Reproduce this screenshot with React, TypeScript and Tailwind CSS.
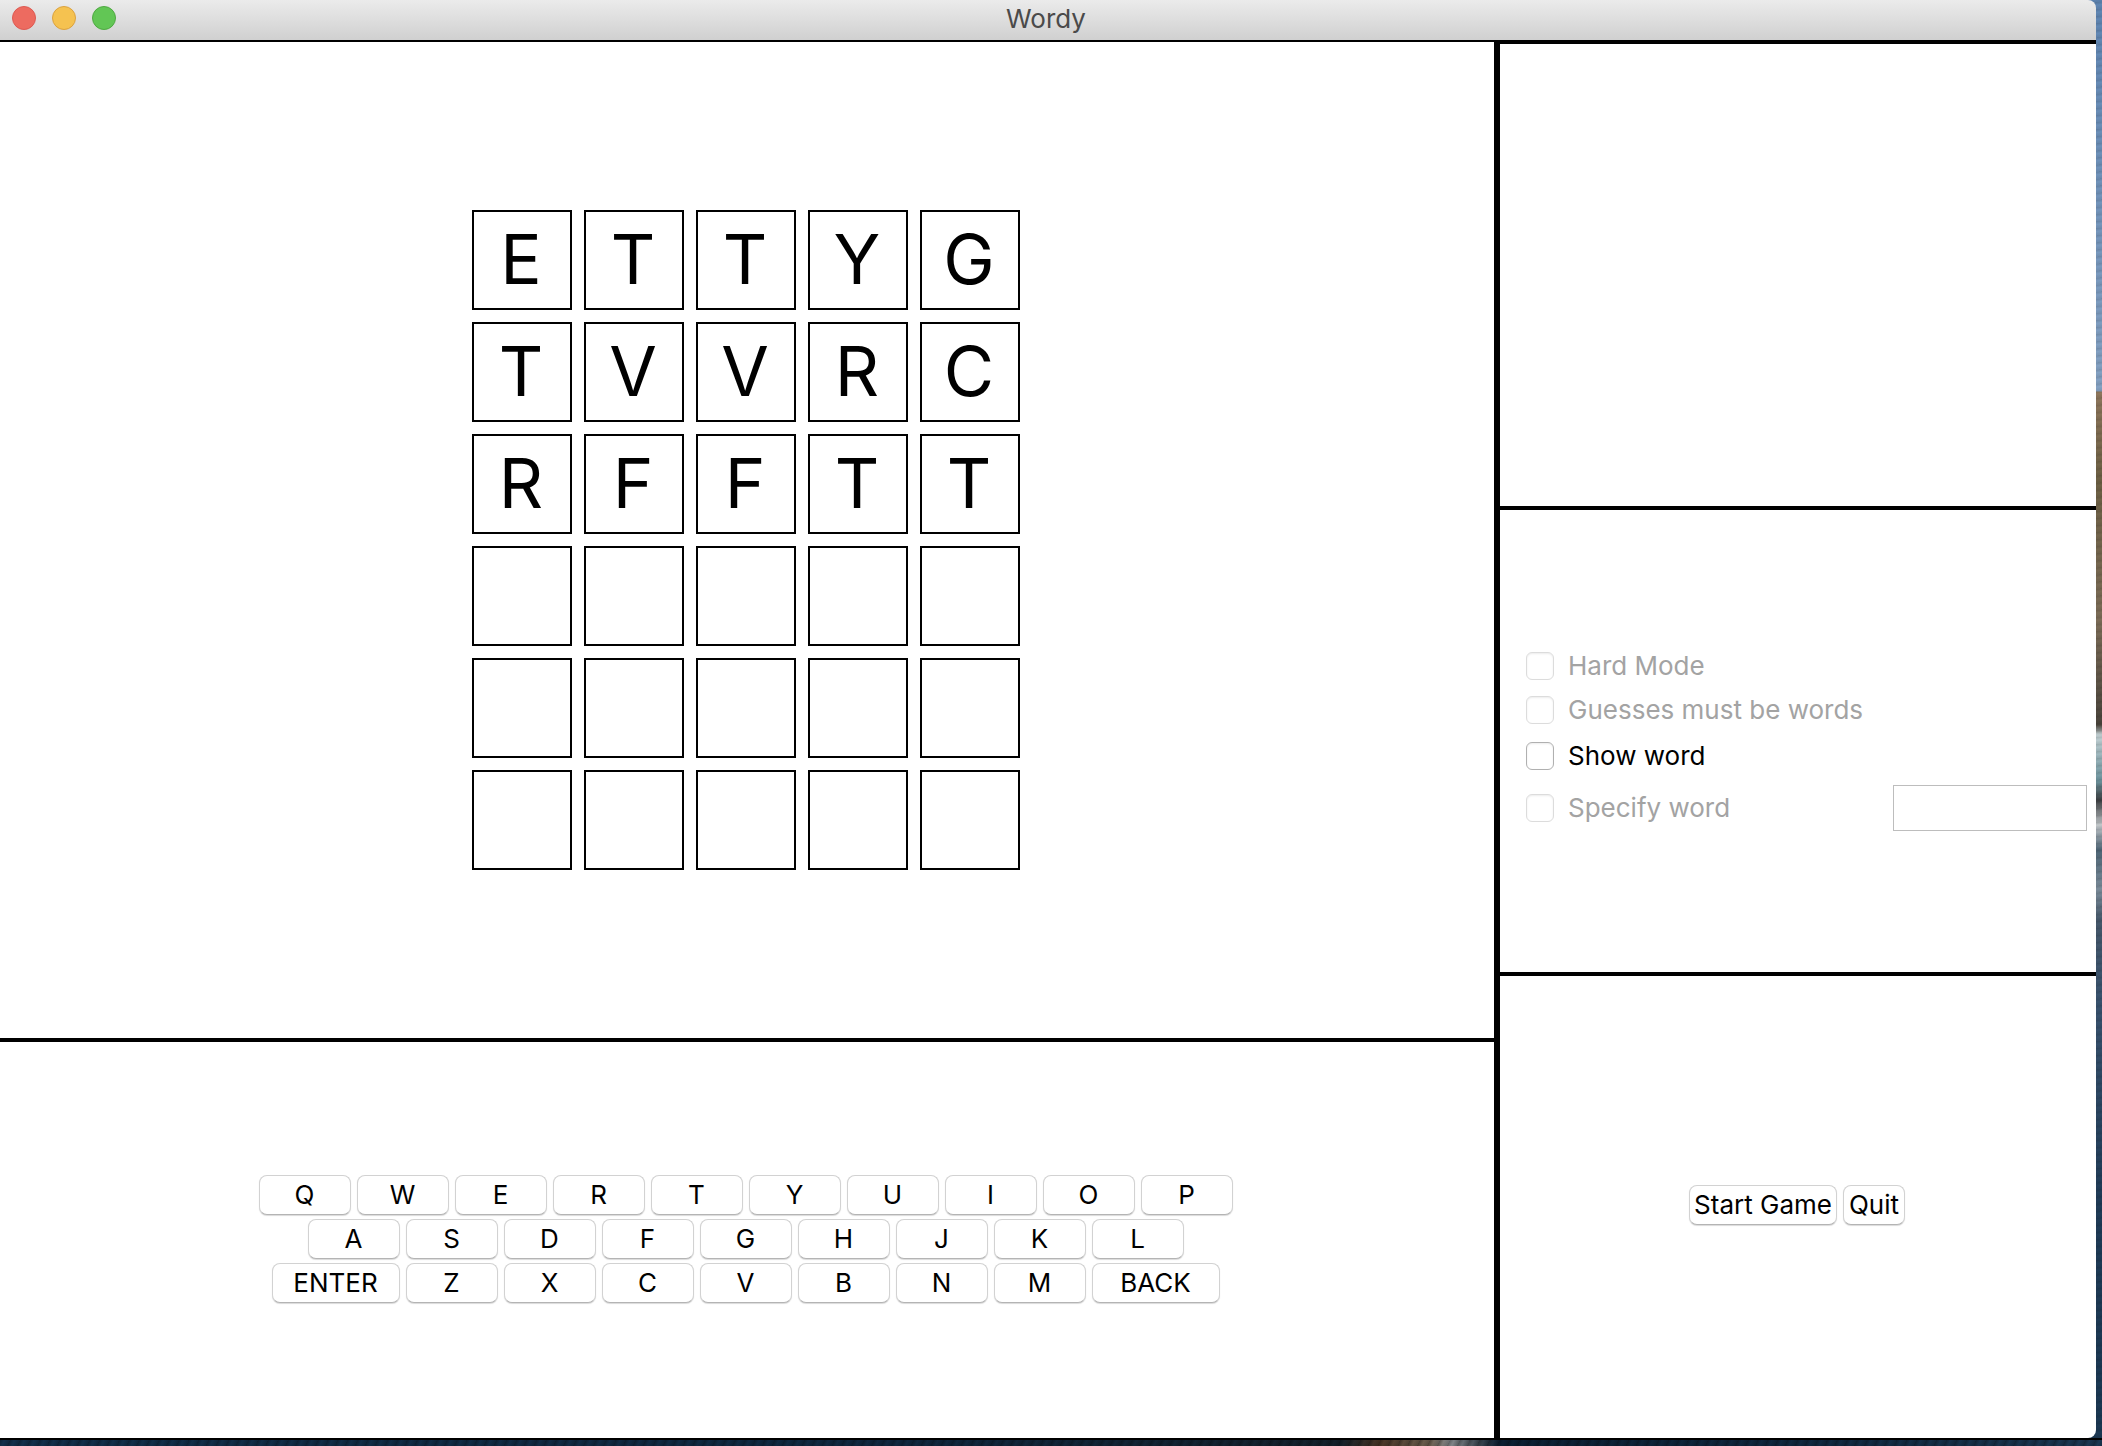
import { useState, type ReactNode } from "react";

const guesses = ["ETTYG", "TVVRC", "RFFTT", "", "", ""];
const keyRows = [
  ["Q", "W", "E", "R", "T", "Y", "U", "I", "O", "P"],
  ["A", "S", "D", "F", "G", "H", "J", "K", "L"],
  ["ENTER", "Z", "X", "C", "V", "B", "N", "M", "BACK"],
];

function TitleBar() {
  return (
    <header className="grid h-[42px] shrink-0 grid-cols-[1fr_auto_1fr] items-center rounded-tr-lg border-b-2 border-black bg-linear-to-b from-[#ebebeb] to-[#d0d0d0] pr-4 pb-1 pl-3">
      <div className="flex gap-4">
        <button aria-label="Close" className="size-6 rounded-full border border-[#dd5a52] bg-[#ed6b60]" />
        <button aria-label="Minimize" className="size-6 rounded-full border border-[#dba240] bg-[#f5c250]" />
        <button aria-label="Zoom" className="size-6 rounded-full border border-[#4fa942] bg-[#62c655]" />
      </div>
      <h1 className="pt-0.5 text-[26px] leading-8 text-[#4a4a4a]">Wordy</h1>
    </header>
  );
}

function Board() {
  return (
    <section aria-label="Board" className="flex flex-1 items-center justify-center pr-0.5">
      <div className="grid grid-cols-5 gap-3">
        {guesses.map((word, row) =>
          [0, 1, 2, 3, 4].map((col) => (
            <div
              key={`${row}-${col}`}
              className="flex size-[100px] items-center justify-center border-2 border-black pr-0.5 pb-0.5 text-[69px] leading-none"
            >
              {word[col]}
            </div>
          )),
        )}
      </div>
    </section>
  );
}

function PushButton({ children, size }: { children: ReactNode; size: string }) {
  return (
    <button
      className={`${size} h-10 rounded-lg border border-[#d2d2d2] border-b-[#b4b4b4] bg-white text-center text-[26px] leading-8 whitespace-nowrap shadow-[0_1px_1px_rgba(0,0,0,0.15)]`}
    >
      {children}
    </button>
  );
}

function Keyboard() {
  return (
    <section
      aria-label="Keyboard"
      className="flex h-[400px] flex-col items-center justify-center gap-1 border-t-4 border-black pr-[3px] pb-0.5"
    >
      {keyRows.map((row) => (
        <div key={row[0]} className="flex gap-1.5">
          {row.map((k) => (
            <PushButton key={k} size={k.length > 1 ? "w-32" : "w-[92px]"}>
              {k}
            </PushButton>
          ))}
        </div>
      ))}
    </section>
  );
}

function Option({ label, disabled, children, height }: { label: string; disabled?: boolean; children?: ReactNode; height: string }) {
  const [on, setOn] = useState(false);
  return (
    <div className={`${height} flex items-center justify-between`}>
      <label className={`flex items-center gap-3.5 text-[26px] leading-8 ${disabled ? "text-[#a3a3a3]" : "text-black"}`}>
        <input
          type="checkbox"
          checked={on}
          disabled={disabled}
          onChange={(e) => setOn(e.target.checked)}
          className={`size-7 appearance-none rounded-md border bg-white shadow-[inset_0_1px_2px_rgba(0,0,0,0.08)] checked:bg-[#2f7cf6] ${disabled ? "border-[#dcdcdc]" : "border-[#b0b0b0]"}`}
        />
        {label}
      </label>
      {children}
    </div>
  );
}

export default function App() {
  return (
    <div className="flex h-screen min-h-[1000px] flex-col bg-[#0d1f30] font-['Inter',sans-serif] text-black">
      <div className="flex min-h-0 flex-1 bg-[repeating-linear-gradient(172deg,rgba(0,0,0,0.12)_0px,transparent_3px,rgba(0,0,0,0.08)_7px),linear-gradient(to_bottom,#5f86b4_0px,#86a3c4_391px,#8f775d_392px,#6d6044_480px,#7d6d58_620px,#4a443c_725px,#c5d3d6_735px,#6f96a0_780px,#3c3f42_800px,#c3c8cb_825px,#4f6677_850px,#7d8e9c_890px,#46586b_920px,#39536f_1000px,#203c58_1200px,#1b3853_1430px)]">
        <div className="flex min-w-0 flex-1 flex-col">
          <TitleBar />
          <main className="flex min-h-0 flex-1 rounded-br-lg bg-white">
            <div className="flex min-w-0 flex-1 flex-col">
              <Board />
              <Keyboard />
            </div>
            <aside className="grid w-[602px] grid-rows-[232fr_233fr_233fr] border-l-6 border-black">
              <section aria-label="Messages" className="border-t-2 border-black" />
              <section aria-label="Options" className="flex flex-col justify-center border-t-4 border-black pr-[9px] pb-0.5 pl-[26px]">
                <Option label="Hard Mode" disabled height="h-11" />
                <Option label="Guesses must be words" disabled height="h-11" />
                <Option label="Show word" height="h-12" />
                <Option label="Specify word" disabled height="h-14">
                  <input
                    type="text"
                    aria-label="Word to guess"
                    className="h-[46px] w-[194px] border border-[#bdbdbd] bg-white px-2 text-[26px] outline-none"
                  />
                </Option>
              </section>
              <section aria-label="Game" className="flex items-center justify-center gap-1.5 border-t-4 border-black pr-0.5 pb-1">
                <PushButton size="w-[148px]">Start Game</PushButton>
                <PushButton size="w-[62px]">Quit</PushButton>
              </section>
            </aside>
          </main>
        </div>
        <div className="w-1.5 shrink-0" />
      </div>
      <div className="h-2 shrink-0 border-t-2 border-black bg-[repeating-linear-gradient(115deg,rgba(0,0,0,0.3)_0px,transparent_4px,rgba(0,0,0,0.2)_9px),linear-gradient(to_right,#12304c_0px,#0f2840_900px,#13202b_1340px,#4a3526_1380px,#6d6050_1430px,#85898c_1450px,#3a4650_1480px,#0b1f33_1500px,#0f2840_1800px,#1b3853_2102px)]" />
    </div>
  );
}
